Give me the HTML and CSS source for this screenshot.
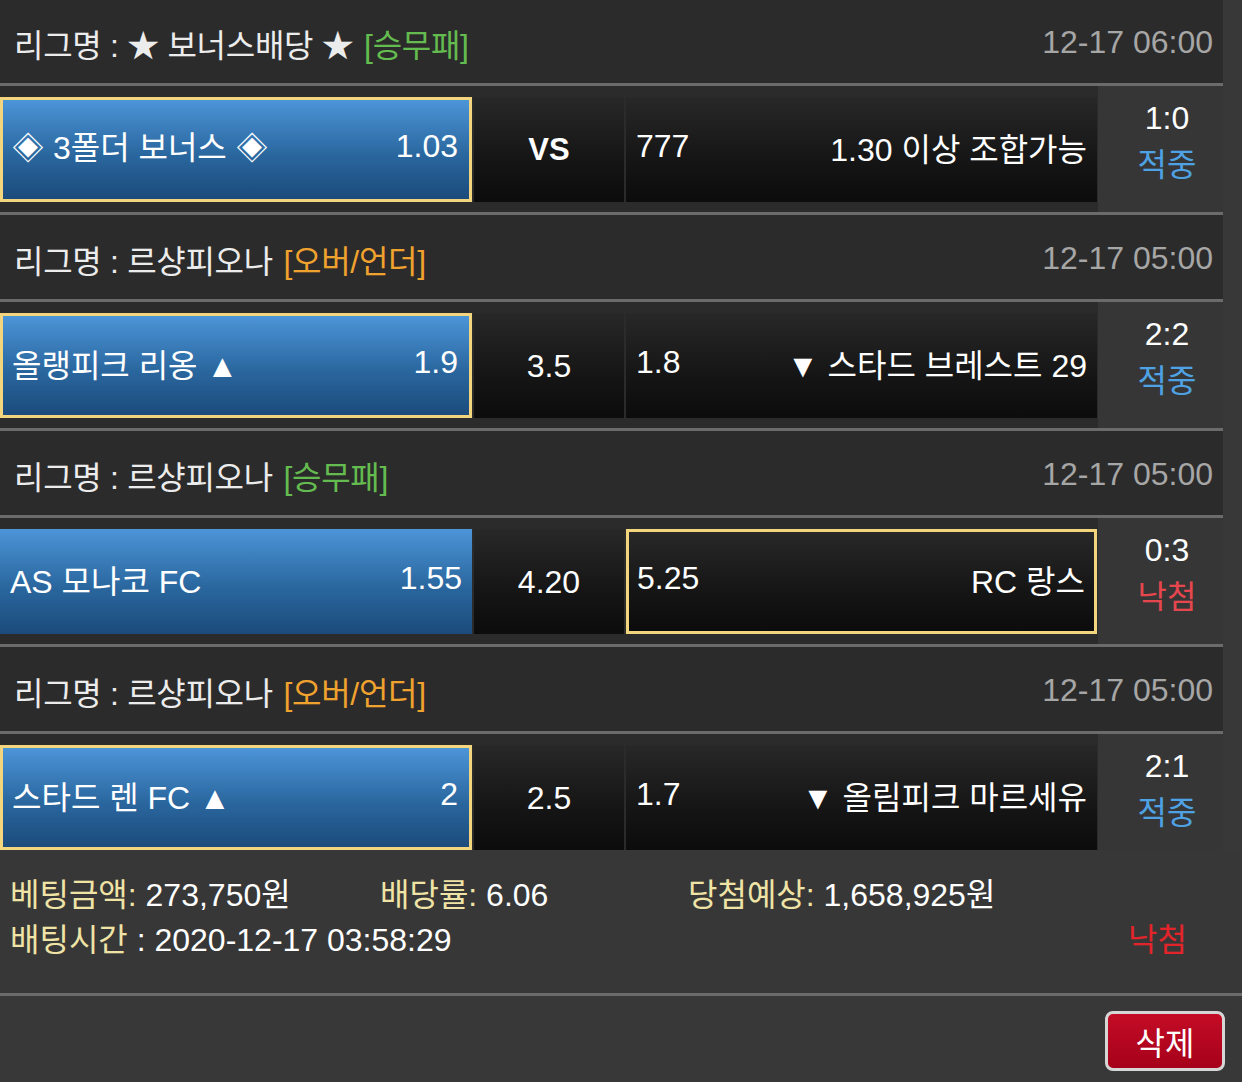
FILE: index.html
```html
<!DOCTYPE html>
<html lang="ko">
<head>
<meta charset="utf-8">
<title>베팅내역</title>
<link rel="stylesheet" href="styles.css">
</head>
<body>
<div class="list">
  <div class="match">
    <div class="league">
      <span class="lname">리그명 : ★ 보너스배당 ★ <span class="type green">[승무패]</span></span>
      <span class="date">12-17 06:00</span>
    </div>
    <div class="row">
      <div class="cells">
        <div class="cell home sel"><span>◈ 3폴더 보너스 ◈</span><span>1.03</span></div>
        <div class="cell draw"><b class="vs">VS</b></div>
        <div class="cell away"><span>777</span><span>1.30 이상 조합가능</span></div>
      </div>
      <div class="score"><div>1:0</div><div class="hit">적중</div></div>
    </div>
  </div>

  <div class="match">
    <div class="league">
      <span class="lname">리그명 : 르샹피오나 <span class="type orange">[오버/언더]</span></span>
      <span class="date">12-17 05:00</span>
    </div>
    <div class="row">
      <div class="cells">
        <div class="cell home sel"><span>올랭피크 리옹 ▲</span><span>1.9</span></div>
        <div class="cell draw"><span class="mid">3.5</span></div>
        <div class="cell away"><span>1.8</span><span>▼ 스타드 브레스트 29</span></div>
      </div>
      <div class="score"><div>2:2</div><div class="hit">적중</div></div>
    </div>
  </div>

  <div class="match">
    <div class="league">
      <span class="lname">리그명 : 르샹피오나 <span class="type green">[승무패]</span></span>
      <span class="date">12-17 05:00</span>
    </div>
    <div class="row">
      <div class="cells">
        <div class="cell home"><span>AS 모나코 FC</span><span>1.55</span></div>
        <div class="cell draw"><span class="mid">4.20</span></div>
        <div class="cell away sel"><span>5.25</span><span>RC 랑스</span></div>
      </div>
      <div class="score"><div>0:3</div><div class="miss">낙첨</div></div>
    </div>
  </div>

  <div class="match">
    <div class="league">
      <span class="lname">리그명 : 르샹피오나 <span class="type orange">[오버/언더]</span></span>
      <span class="date">12-17 05:00</span>
    </div>
    <div class="row last">
      <div class="cells">
        <div class="cell home sel"><span>스타드 렌 FC ▲</span><span>2</span></div>
        <div class="cell draw"><span class="mid">2.5</span></div>
        <div class="cell away"><span>1.7</span><span>▼ 올림피크 마르세유</span></div>
      </div>
      <div class="score"><div>2:1</div><div class="hit">적중</div></div>
    </div>
  </div>
</div>

<div class="summary">
  <div class="sum-line">
    <span><span class="label">베팅금액:</span> 273,750원</span>
    <span><span class="label">배당률:</span> 6.06</span>
    <span><span class="label">당첨예상:</span> 1,658,925원</span>
  </div>
  <div class="sum-line2">
    <span><span class="label">배팅시간</span> : 2020-12-17 03:58:29</span>
    <span class="result-miss">낙첨</span>
  </div>
</div>

<div class="actions">
  <button class="btn-delete" type="button">삭제</button>
</div>
</body>
</html>
```

FILE: styles.css
```css
html, body {
  margin: 0;
  padding: 0;
}

body {
  background: #383838;
  color: #ffffff;
  font-family: "Liberation Sans", "Noto Sans CJK KR", sans-serif;
  font-size: 32px;
  height: 1082px;
  overflow: hidden;
}

.list {
  width: 1223px;
  margin-top: -1px;
}

.league {
  height: 81px;
  padding: 3px 10px 0 14px;
  background: #2b2b2b;
  border-bottom: 3px solid #6b6b6b;
  display: flex;
  align-items: center;
  justify-content: space-between;
  color: #ececec;
  white-space: nowrap;
}

.lname {
  letter-spacing: -0.3px;
}

.type {
  margin-left: 2px;
}

.green {
  color: #64bb4f;
}

.orange {
  color: #f0a22e;
}

.date {
  color: #a6a6a6;
  font-size: 32px;
  letter-spacing: 0;
}

.row {
  display: flex;
  height: 126px;
  border-bottom: 3px solid #6b6b6b;
}

.row.last {
  height: 116px;
  border-bottom: 0;
}

.cells {
  width: 1098px;
  box-sizing: border-box;
  padding: 11px 0 10px;
  background: #2b2b2b;
  display: grid;
  grid-template-columns: 472px 150px 471px;
  column-gap: 2px;
}

.row.last .cells {
  padding-bottom: 0;
}

.cell {
  height: 105px;
  box-sizing: border-box;
  display: flex;
  align-items: center;
  justify-content: space-between;
  padding: 0 10px 6px;
  white-space: nowrap;
}

.home {
  background: linear-gradient(#4c95d8, #2a679f 55%, #1b4b7b);
}

.draw,
.away {
  background: linear-gradient(#282828, #151515 60%, #0c0c0c);
}

.draw {
  justify-content: center;
  padding: 0;
}

.home.sel {
  border: 3px solid #f2d57c;
  padding: 0 11px 6px 9px;
}

.away.sel {
  border: 3px solid #f2d57c;
  padding: 0 9px 6px 8px;
}

.vs {
  font-weight: bold;
  font-size: 31px;
}

.mid {
  padding-top: 2px;
}

.score {
  flex: 1;
  background: #363636;
  padding: 9px 0 0 13px;
  text-align: center;
  line-height: 47px;
}

.hit {
  color: #4ea2e4;
}

.miss {
  color: #e6474e;
}

.summary {
  background: #373737;
  padding: 23px 0 30px 10px;
  line-height: 45px;
  border-bottom: 3px solid #6b6b6b;
}

.sum-line {
  display: grid;
  grid-template-columns: 370px 308px auto;
}

.sum-line2 {
  display: flex;
  justify-content: space-between;
  padding-right: 55px;
}

.label {
  color: #efe4a6;
}

.result-miss {
  color: #e3252b;
}

.actions {
  display: flex;
  justify-content: flex-end;
  padding: 15px 17px 0 0;
}

.btn-delete {
  width: 120px;
  height: 60px;
  border: 3px solid #d6d6d6;
  border-radius: 8px;
  background: linear-gradient(#c40c26, #a6011a);
  color: #ffffff;
  font-family: "Liberation Sans", "Noto Sans CJK KR", sans-serif;
  font-size: 32px;
  padding: 0;
}
```
